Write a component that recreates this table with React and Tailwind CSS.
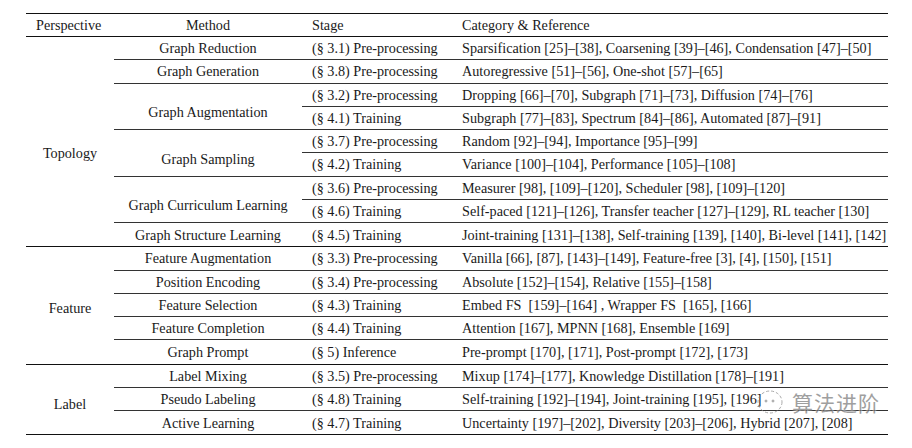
const SECTIONS = [
  {
    name: 'Topology',
    pad: 'pt-[22px]',
    methods: [
      { name: 'Graph Reduction', rows: [['(§ 3.1) Pre-processing', 'Sparsification [25]–[38], Coarsening [39]–[46], Condensation [47]–[50]']] },
      { name: 'Graph Generation', rows: [['(§ 3.8) Pre-processing', 'Autoregressive [51]–[56], One-shot [57]–[65]']] },
      {
        name: 'Graph Augmentation',
        rows: [
          ['(§ 3.2) Pre-processing', 'Dropping [66]–[70], Subgraph [71]–[73], Diffusion [74]–[76]'],
          ['(§ 4.1) Training', 'Subgraph [77]–[83], Spectrum [84]–[86], Automated [87]–[91]'],
        ],
      },
      {
        name: 'Graph Sampling',
        rows: [
          ['(§ 3.7) Pre-processing', 'Random [92]–[94], Importance [95]–[99]'],
          ['(§ 4.2) Training', 'Variance [100]–[104], Performance [105]–[108]'],
        ],
      },
      {
        name: 'Graph Curriculum Learning',
        rows: [
          ['(§ 3.6) Pre-processing', 'Measurer [98], [109]–[120], Scheduler [98], [109]–[120]'],
          ['(§ 4.6) Training', 'Self-paced [121]–[126], Transfer teacher [127]–[129], RL teacher [130]'],
        ],
      },
      { name: 'Graph Structure Learning', rows: [['(§ 4.5) Training', 'Joint-training [131]–[138], Self-training [139], [140], Bi-level [141], [142]']] },
    ],
  },
  {
    name: 'Feature',
    pad: 'pt-[5px]',
    methods: [
      { name: 'Feature Augmentation', rows: [['(§ 3.3) Pre-processing', 'Vanilla [66], [87], [143]–[149], Feature-free [3], [4], [150], [151]']] },
      { name: 'Position Encoding', rows: [['(§ 3.4) Pre-processing', 'Absolute [152]–[154], Relative [155]–[158]']] },
      { name: 'Feature Selection', rows: [['(§ 4.3) Training', 'Embed FS  [159]–[164] , Wrapper FS  [165], [166]']] },
      { name: 'Feature Completion', rows: [['(§ 4.4) Training', 'Attention [167], MPNN [168], Ensemble [169]']] },
      { name: 'Graph Prompt', rows: [['(§ 5) Inference', 'Pre-prompt [170], [171], Post-prompt [172], [173]']] },
    ],
  },
  {
    name: 'Label',
    pad: 'pt-[10px]',
    methods: [
      { name: 'Label Mixing', rows: [['(§ 3.5) Pre-processing', 'Mixup [174]–[177], Knowledge Distillation [178]–[191]']] },
      { name: 'Pseudo Labeling', rows: [['(§ 4.8) Training', 'Self-training [192]–[194], Joint-training [195], [196]']] },
      { name: 'Active Learning', rows: [['(§ 4.7) Training', 'Uncertainty [197]–[202], Diversity [203]–[206], Hybrid [207], [208]']] },
    ],
  },
];

function Section({ section }) {
  const total = section.methods.reduce((n, m) => n + m.rows.length, 0);
  let rowIdx = 0;
  const cells = [];
  section.methods.forEach((m, mi) => {
    const lastMethod = mi === section.methods.length - 1;
    const start = rowIdx;
    cells.push(
      <div
        key={'m' + mi}
        style={{ gridColumn: 2, gridRow: `${start + 1} / span ${m.rows.length}` }}
        className={`flex items-center justify-center whitespace-nowrap ${m.rows.length > 1 ? 'pt-[12px]' : ''} ${lastMethod ? '' : 'border-b border-[#333]'}`}
      >
        {m.name}
      </div>
    );
    m.rows.forEach(r => {
      const last = rowIdx === total - 1;
      const b = last ? '' : 'border-b border-[#333]';
      cells.push(
        <div key={'s' + rowIdx} style={{ gridColumn: 3, gridRow: rowIdx + 1 }} className={`flex items-center pl-[10px] whitespace-nowrap ${b}`}>
          {r[0]}
        </div>,
        <div key={'c' + rowIdx} style={{ gridColumn: 4, gridRow: rowIdx + 1 }} className={`flex items-center pl-[10px] whitespace-pre ${b}`}>
          {r[1]}
        </div>
      );
      rowIdx++;
    });
  });

  return (
    <div className="grid grid-cols-[88px_188px_150px_436px] auto-rows-[23.25px] border-b-[1.5px] border-[#111]">
      <div style={{ gridColumn: 1, gridRow: `1 / span ${total}` }} className={`flex items-center justify-center ${section.pad}`}>
        {section.name}
      </div>
      {cells}
    </div>
  );
}

export default function App() {
  return (
    <div className="relative w-[912px] h-[448px] bg-white text-[#1a1a1a] text-[14.2px] leading-none font-['Liberation_Serif',serif] overflow-hidden">
      <div className="ml-[26px] mt-[12.5px] w-[862px] border-t-[1.5px] border-[#111]">
        <div className="grid grid-cols-[88px_188px_150px_436px] h-[23.5px] border-b-[1.5px] border-[#111]">
          <div className="flex items-center pl-[10px]">Perspective</div>
          <div className="flex items-center justify-center">Method</div>
          <div className="flex items-center pl-[10px]">Stage</div>
          <div className="flex items-center pl-[10px]">Category &amp; Reference</div>
        </div>
        {SECTIONS.map(s => (
          <Section key={s.name} section={s} />
        ))}
      </div>

      {/* watermark */}
      <div className="absolute left-[756px] top-[389px] flex items-center gap-[8px] opacity-70">
        <svg width="28" height="26" viewBox="0 0 28 26" fill="none" stroke="#888" strokeWidth="1">
          <ellipse cx="14" cy="13" rx="12" ry="11" strokeDasharray="3 2" />
          <circle cx="10" cy="12" r="1" fill="#888" />
          <circle cx="17" cy="12" r="1" fill="#888" />
        </svg>
        <span className="text-[21px] tracking-[1px] text-[#777] font-['Noto_Sans_CJK_SC',sans-serif] [text-shadow:0_0_2px_#fff,0_0_2px_#fff]">算法进阶</span>
      </div>
    </div>
  );
}
